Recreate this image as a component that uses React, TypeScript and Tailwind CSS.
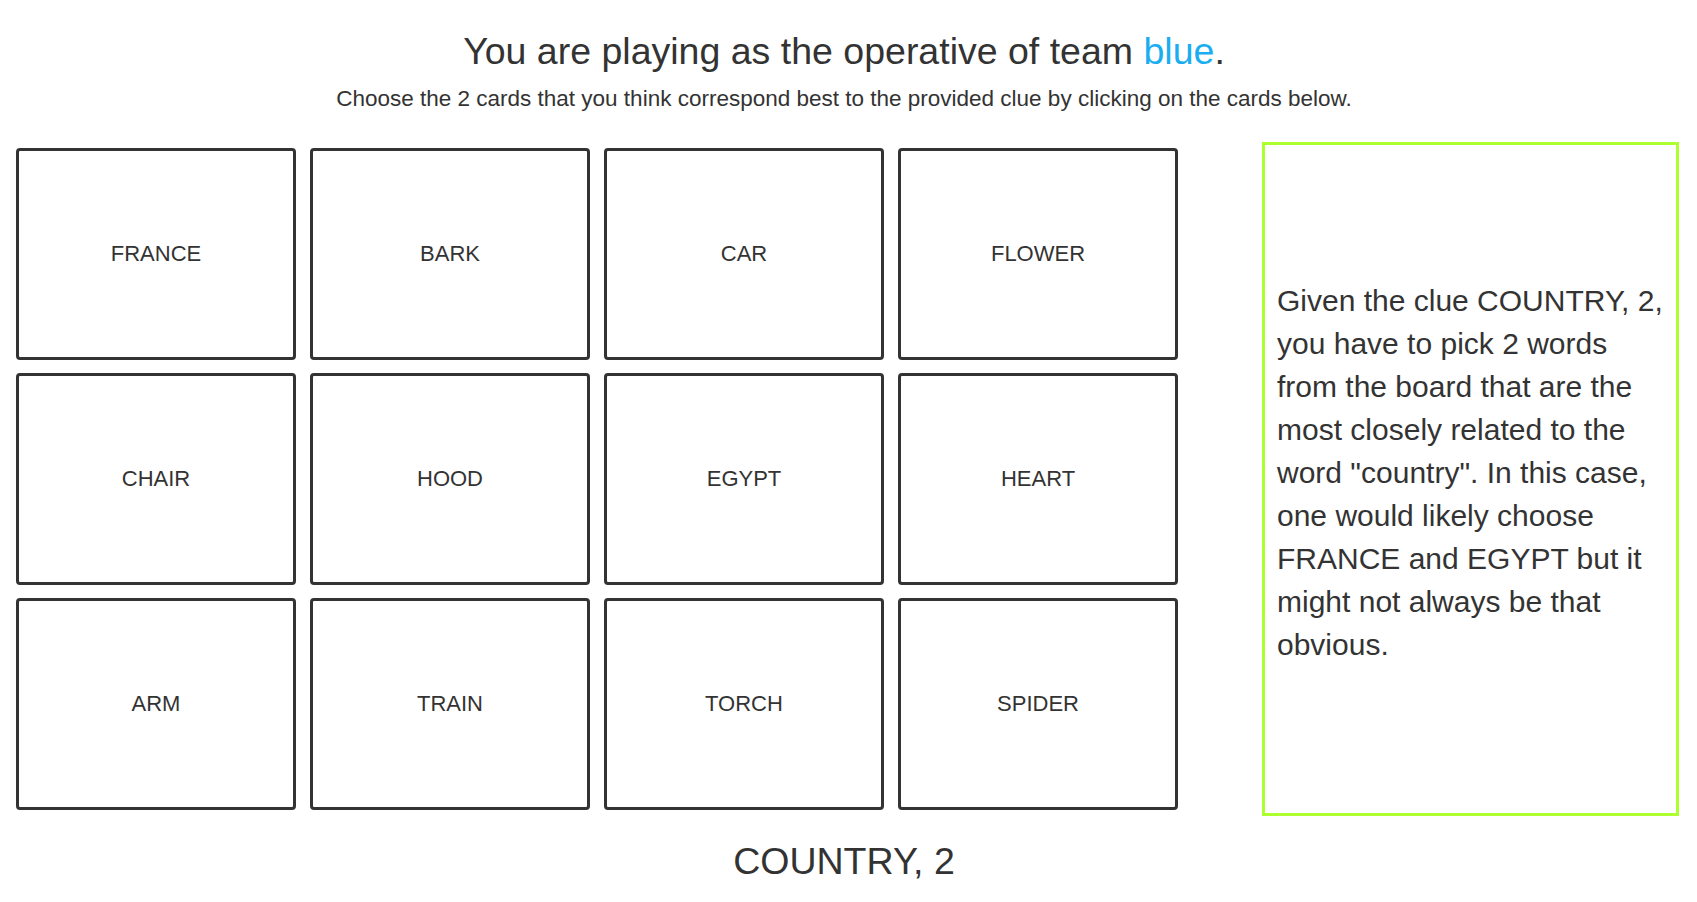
import React from 'react';

const cards = [
  'FRANCE', 'BARK', 'CAR', 'FLOWER',
  'CHAIR', 'HOOD', 'EGYPT', 'HEART',
  'ARM', 'TRAIN', 'TORCH', 'SPIDER',
];

function App() {
  return (
    <div
      className="min-h-screen w-[1688px] bg-white text-[#333333] pt-[30px]"
      style={{ fontFamily: '"Liberation Sans", Arial, sans-serif' }}
    >
      <h1 className="text-center text-[37.5px] leading-[42px]">
        You are playing as the operative of team <span className="text-[#1aaef0]">blue</span>.
      </h1>
      <p className="mt-[14px] text-center text-[22.5px] leading-[26px]">
        Choose the 2 cards that you think correspond best to the provided clue by clicking on the cards below.
      </p>

      <div className="mt-[30px] flex items-center justify-between pl-[16px] pr-[9px]">
        <div className="grid grid-cols-[repeat(4,280px)] gap-x-[14px] gap-y-[13px]">
          {cards.map((word) => (
            <button
              key={word}
              className="flex h-[212px] items-center justify-center rounded-[4px] border-[3px] border-[#333333] bg-white pb-[2px] text-[22px] cursor-pointer"
            >
              {word}
            </button>
          ))}
        </div>

        <div className="flex h-[674px] w-[417px] items-center border-[3px] border-[#adff2f] pl-[12px] pr-[10px] pb-[14px]">
          <p className="text-[30px] leading-[43px]">
            Given the clue COUNTRY, 2, you have to pick 2 words from the board that are the most closely related to the word "country". In this case, one would likely choose FRANCE and EGYPT but it might not always be that obvious.
          </p>
        </div>
      </div>

      <div className="mt-[24px] text-center text-[37.5px] leading-[42px]">COUNTRY, 2</div>
    </div>
  );
}

export default App;
